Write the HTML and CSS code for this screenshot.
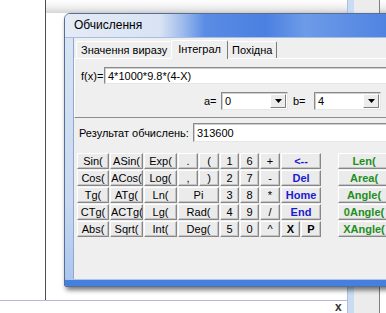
FILE: index.html
```html
<!DOCTYPE html>
<html lang="uk">
<head>
    <meta charset="UTF-8">
    <title>Обчислення</title>
    <link rel="stylesheet" href="styles.css">
</head>
<body>
    <div class="desk">
        <div class="ruler"></div>
        <div class="page-edge"></div>
        <div class="page-bottom"></div>
        <div class="side-bar"></div>
        <div class="side-gray"></div>
        <div class="close-x">x</div>

        <div class="dialog">
            <div class="title">Обчислення</div>
            <div class="client">
                <div class="tabs">
                    <div class="tab">Значення виразу</div>
                    <div class="tab active">Інтеграл</div>
                    <div class="tab">Похідна</div>
                </div>
                <div class="tab-panel">
                    <div class="fx-row">
                        <span class="lbl">f(x)=</span>
                        <div class="field fx-field">4*1000*9.8*(4-X)</div>
                    </div>
                    <div class="range-row">
                        <span class="lbl lbl-a">a=</span>
                        <div class="combo">
                            <span class="combo-value">0</span>
                            <span class="combo-btn"><svg width="7" height="4" viewBox="0 0 7 4"><path d="M0 0h7L3.5 4z" fill="#000"/></svg></span>
                        </div>
                        <span class="lbl lbl-b">b=</span>
                        <div class="combo">
                            <span class="combo-value">4</span>
                            <span class="combo-btn"><svg width="7" height="4" viewBox="0 0 7 4"><path d="M0 0h7L3.5 4z" fill="#000"/></svg></span>
                        </div>
                    </div>
                </div>
                <div class="result-row">
                    <span class="lbl result-lbl">Результат обчислень:</span>
                    <div class="field result-field">313600</div>
                </div>
                <div class="keys">
                    <button class="key">Sin(</button>
                    <button class="key">ASin(</button>
                    <button class="key">Exp(</button>
                    <button class="key">.</button>
                    <button class="key">(</button>
                    <button class="key">1</button>
                    <button class="key">6</button>
                    <button class="key">+</button>
                    <button class="key wide blue">&lt;--</button>
                    <button class="key green">Len(</button>

                    <button class="key">Cos(</button>
                    <button class="key">ACos(</button>
                    <button class="key">Log(</button>
                    <button class="key">,</button>
                    <button class="key">)</button>
                    <button class="key">2</button>
                    <button class="key">7</button>
                    <button class="key">-</button>
                    <button class="key wide blue">Del</button>
                    <button class="key green">Area(</button>

                    <button class="key">Tg(</button>
                    <button class="key">ATg(</button>
                    <button class="key">Ln(</button>
                    <button class="key wide">Pi</button>
                    <button class="key">3</button>
                    <button class="key">8</button>
                    <button class="key">*</button>
                    <button class="key wide blue">Home</button>
                    <button class="key green">Angle(</button>

                    <button class="key">CTg(</button>
                    <button class="key">ACTg(</button>
                    <button class="key">Lg(</button>
                    <button class="key wide">Rad(</button>
                    <button class="key">4</button>
                    <button class="key">9</button>
                    <button class="key">/</button>
                    <button class="key wide blue">End</button>
                    <button class="key green">0Angle(</button>

                    <button class="key">Abs(</button>
                    <button class="key">Sqrt(</button>
                    <button class="key">Int(</button>
                    <button class="key wide">Deg(</button>
                    <button class="key">5</button>
                    <button class="key">0</button>
                    <button class="key">^</button>
                    <button class="key bold">X</button>
                    <button class="key bold">P</button>
                    <button class="key green">XAngle(</button>
                </div>
            </div>
        </div>
    </div>
</body>
</html>
```

FILE: styles.css
```css
body {
    margin: 0;
    font-family: "Liberation Sans", Arial, sans-serif;
    font-size: 11px;
    color: #000;
}
.desk {
    position: relative;
    width: 386px;
    height: 313px;
    overflow: hidden;
    background: #fff;
}

/* things behind the dialog */
.ruler {
    position: absolute;
    left: 46px;
    right: 0;
    top: 0;
    height: 13px;
    background: linear-gradient(to bottom, #fff 0%, #f2f2f2 50%, #d6d6d6 100%);
}
.page-edge {
    position: absolute;
    left: 45px;
    top: 0;
    width: 1px;
    height: 301px;
    background: #4e4e4e;
}
.page-bottom {
    position: absolute;
    left: 0;
    top: 300px;
    width: 347px;
    height: 1px;
    background: #b9b5e3;
}
.side-bar {
    position: absolute;
    left: 347px;
    top: 0;
    width: 6px;
    height: 313px;
    background: #c9dcf2;
    border-left: 1px solid #a9c0e0;
}
.side-gray {
    position: absolute;
    left: 354px;
    top: 0;
    width: 25px;
    height: 313px;
    background: #ececec;
    border-right: 1px solid #7e7e7e;
}
.close-x {
    position: absolute;
    left: 335px;
    top: 300px;
    font-size: 12px;
    font-weight: bold;
    color: #333;
}

/* dialog window */
.dialog {
    position: absolute;
    left: 64px;
    top: 13px;
    width: 340px;
    height: 274px;
    box-sizing: border-box;
    border: 1px solid #566f97;
    border-radius: 6px 6px 2px 2px;
    background: linear-gradient(to bottom, #dbe5f3 0%, #c7d8f0 70%, #a9c4ee 100%);
    box-shadow: inset 0 -6px 0 #4680df, 2px 3px 5px rgba(0, 0, 0, 0.55);
    display: flex;
    flex-direction: column;
}
.title {
    height: 23px;
    line-height: 22px;
    padding-left: 9px;
    font-size: 12px;
    border-radius: 5px 5px 0 0;
    background: linear-gradient(to right, #e4ebf6 0, #d9e3f3 95px, #9dbbec 118px, #5a8ce4 140px, #4b80e1 200px, #6d9be8 240px, #4a7fe0 100%);
    border-bottom: 1px solid #a6bde4;
}
.client {
    flex: 1;
    margin: 0 0 7px 8px;
    background: #efefef;
    border-left: 1px solid #8fa8cf;
}

/* tabs */
.tabs {
    display: flex;
    align-items: flex-end;
    height: 19px;
    padding: 1px 0 0 2px;
}
.tab {
    height: 16px;
    line-height: 16px;
    padding: 0 4px;
    border-top: 1px solid #fff;
    border-left: 1px solid #fff;
    border-right: 1px solid #7a7a7a;
    border-radius: 2px 2px 0 0;
}
.tab.active {
    height: 18px;
    line-height: 17px;
    padding: 0 6px;
    margin: 0 -1px;
    background: #efefef;
    position: relative;
    z-index: 1;
    margin-bottom: -1px;
}
.tab-panel {
    border-top: 1px solid #fff;
    border-left: 1px solid #fff;
    border-bottom: 1px solid #8c8c8c;
    padding: 8px 0 7px 6px;
}
.fx-row {
    display: flex;
    align-items: center;
}
.fx-row .lbl {
    width: 23px;
}
.field {
    height: 17px;
    line-height: 16px;
    box-sizing: border-box;
    background: #fff;
    border: 1px solid;
    border-color: #8a8a8a #e6e6e6 #e6e6e6 #8a8a8a;
    box-shadow: inset 1px 1px 0 #cfcfcf;
    padding-left: 3px;
}
.fx-field {
    flex: 1;
}
.range-row {
    display: flex;
    align-items: center;
    margin-top: 8px;
    padding-left: 123px;
}
.lbl-a {
    width: 17px;
}
.lbl-b {
    width: 21px;
    margin-left: 5px;
}
.combo {
    display: flex;
    width: 67px;
    height: 18px;
    box-sizing: border-box;
    background: #fff;
    border: 1px solid;
    border-color: #8a8a8a #e6e6e6 #e6e6e6 #8a8a8a;
    box-shadow: inset 1px 1px 0 #cfcfcf;
}
.combo-value {
    flex: 1;
    line-height: 16px;
    padding-left: 3px;
}
.combo-btn {
    width: 14px;
    margin: 1px;
    display: flex;
    align-items: center;
    justify-content: center;
    background: #ececec;
    border: 1px solid;
    border-color: #fff #7f7f7f #7f7f7f #fff;
}
.result-row {
    display: flex;
    align-items: center;
    margin-top: 5px;
    padding-left: 5px;
}
.result-lbl {
    width: 114px;
}
.result-field {
    flex: 1;
    height: 19px;
    line-height: 18px;
}

/* calculator keys */
.keys {
    display: grid;
    grid-template-columns: 32px 33px 33px 20px 20px 19px 19px 20px 19px 20px 15px 52px;
    grid-auto-rows: 16px;
    gap: 1px;
    margin-top: 11px;
    padding-left: 3px;
}
.key {
    margin: 0;
    padding: 0;
    font-family: "Liberation Sans", Arial, sans-serif;
    font-size: 11px;
    line-height: 14px;
    color: #000;
    background: #ebebeb;
    border: 1px solid;
    border-color: #fff #878787 #878787 #fff;
    box-shadow: inset -1px -1px 0 #c4c4c4;
    white-space: nowrap;
    overflow: hidden;
}
.key.wide {
    grid-column: span 2;
}
.key.blue {
    color: #1c1ccf;
    font-weight: bold;
}
.key.bold {
    font-weight: bold;
}
.key.green {
    grid-column: 12;
    color: #1d8f1d;
    font-weight: bold;
}
```
